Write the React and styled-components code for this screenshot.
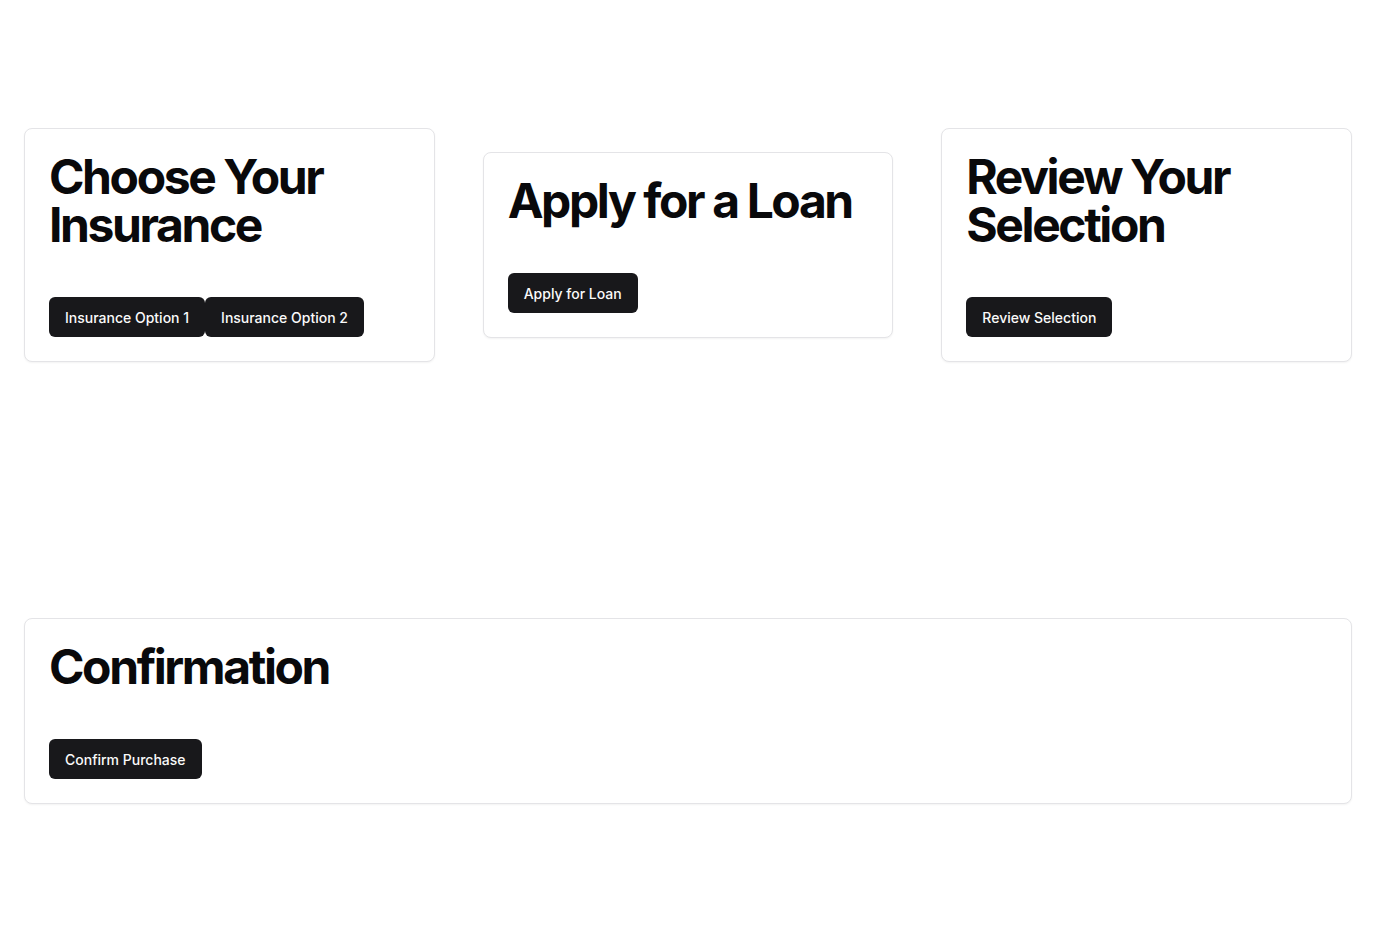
import React from "react";
import styled, { createGlobalStyle } from "styled-components";

const GlobalStyle = createGlobalStyle`
  * {
    box-sizing: border-box;
  }
  body {
    margin: 0;
    background: #ffffff;
    font-family: Inter, "Liberation Sans", sans-serif;
    color: #09090b;
  }
`;

const Page = styled.div`
  display: flex;
  flex-direction: column;
  justify-content: space-around;
  height: 100vh;
  padding: 0 24px;
`;

const Row = styled.div`
  display: grid;
  grid-template-columns: repeat(3, 1fr);
  gap: 48px;
  align-items: center;
`;

const Card = styled.div`
  border: 1px solid #e4e4e7;
  border-radius: 8px;
  background: #ffffff;
  box-shadow: 0 1px 2px rgba(0, 0, 0, 0.05);
  padding: 24px;
  display: flex;
  flex-direction: column;
  gap: 48px;
`;

const Title = styled.h1`
  margin: 0;
  font-size: 48px;
  line-height: 48px;
  font-weight: 700;
  letter-spacing: -0.05em;
  color: #09090b;
`;

const Actions = styled.div`
  display: flex;
`;

const Button = styled.button`
  height: 40px;
  padding: 0 16px;
  border: none;
  border-radius: 6px;
  background: #18181b;
  color: #fafafa;
  font-family: Inter, "Liberation Sans", sans-serif;
  font-size: 14px;
  font-weight: 500;
  cursor: pointer;
  white-space: nowrap;
`;

const Step = ({ title, actions }) => (
  <Card>
    <Title>{title}</Title>
    <Actions>
      {actions.map((label) => (
        <Button key={label}>{label}</Button>
      ))}
    </Actions>
  </Card>
);

export default function App() {
  return (
    <>
      <GlobalStyle />
      <Page>
        <Row>
          <Step
            title="Choose Your Insurance"
            actions={["Insurance Option 1", "Insurance Option 2"]}
          />
          <Step title="Apply for a Loan" actions={["Apply for Loan"]} />
          <Step title="Review Your Selection" actions={["Review Selection"]} />
        </Row>
        <Step title="Confirmation" actions={["Confirm Purchase"]} />
      </Page>
    </>
  );
}
